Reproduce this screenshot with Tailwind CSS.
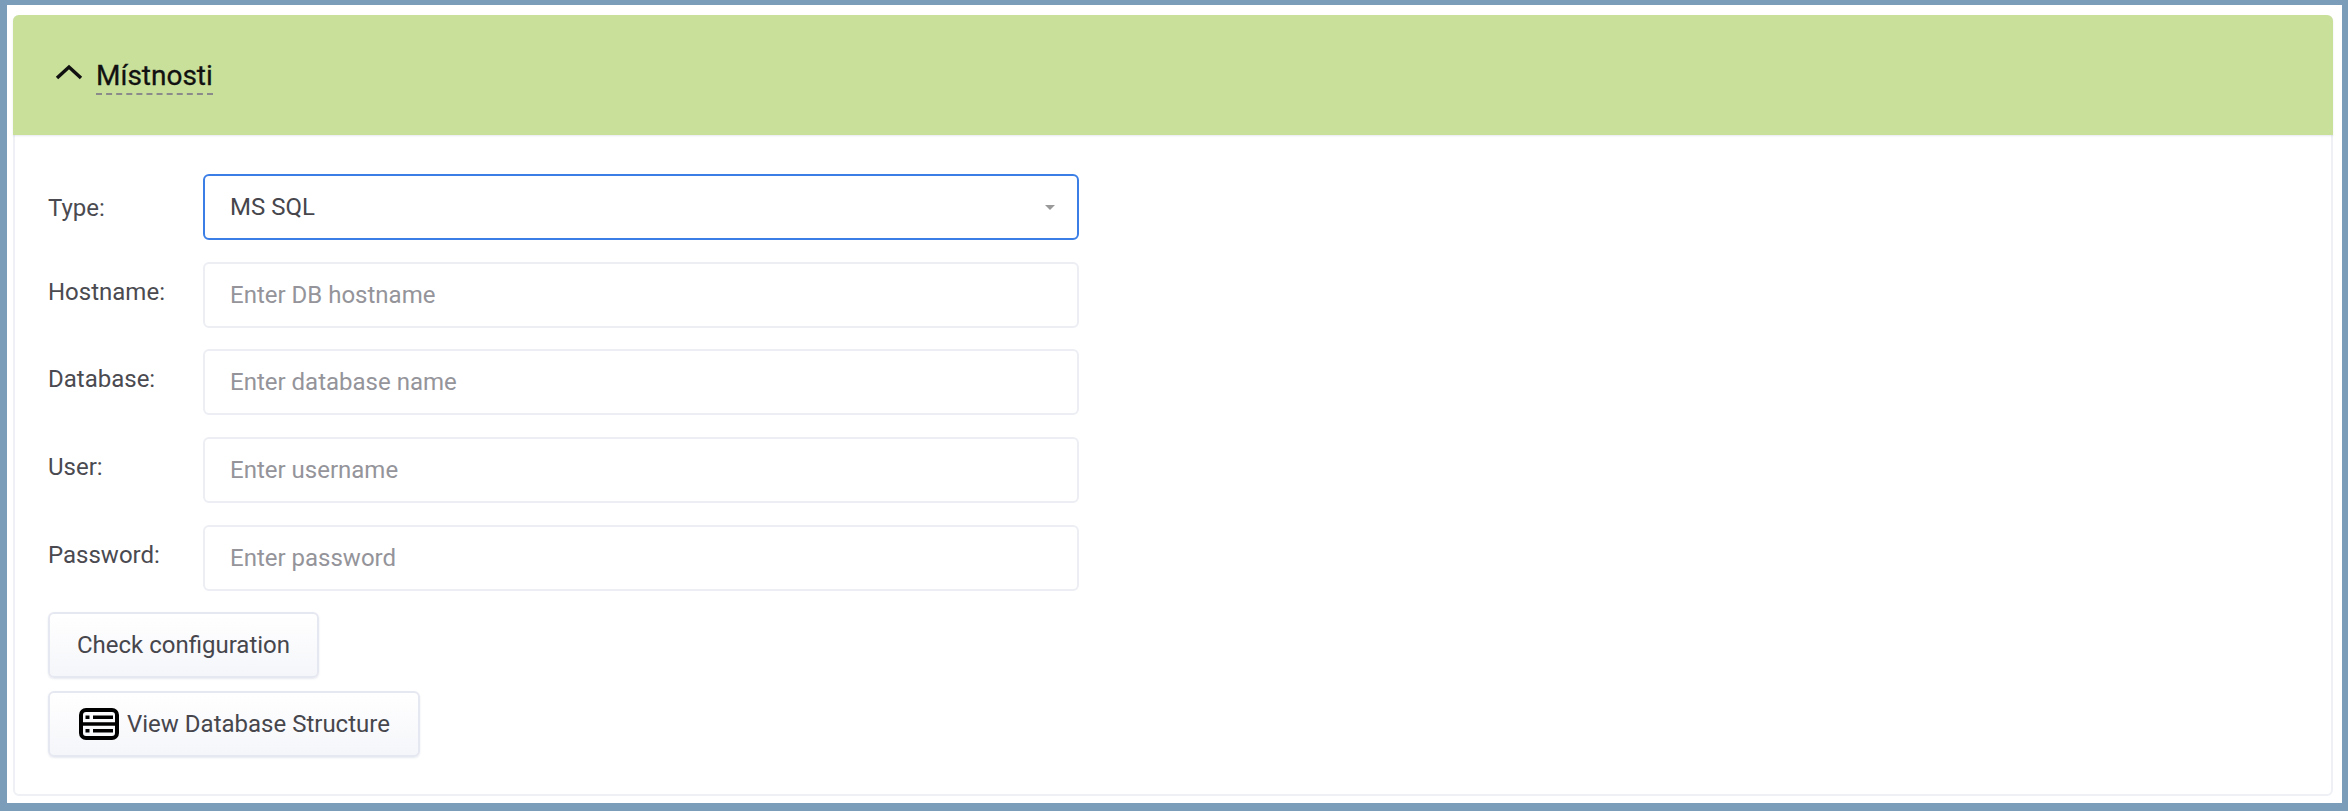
<!DOCTYPE html>
<html lang="en">
<head>
    <meta charset="UTF-8">
    <title>Místnosti</title>
    <script src="https://cdn.jsdelivr.net/npm/@tailwindcss/browser@4"></script>
</head>
<body class="bg-[#7c9dba] h-[811px] overflow-hidden pt-[5px] pr-[6px] pb-[8px] pl-[7px] font-['Roboto',sans-serif]">
    <div class="bg-white h-full pt-[10px] pl-[6px] pr-[9px] pb-[7px]">
        <div class="h-full rounded-[6px] border-2 border-[#eef0f6]">

            <!-- Header -->
            <div class="h-[120px] -m-[2px] mb-0 bg-[#c9e09b] rounded-t-[6px] flex items-center pl-[42px] text-[#111] shadow-[0_1px_2px_rgba(60,70,120,0.12)]">
                <svg class="w-[28px] h-[18px] mr-[13px] mb-[6px]" viewBox="0 0 28 18" fill="none" stroke="#111" stroke-width="3.5">
                    <path d="M2 15 L14 4 L26 15"/>
                </svg>
                <span class="text-[28px] leading-[32px] border-b-2 border-dashed border-[#8a8a8a] pb-[1px] mt-[4px] [-webkit-text-stroke:0.3px_#111]">Místnosti</span>
            </div>

            <!-- Form -->
            <div class="pl-[33px] pt-[39px] text-[24px] text-[#4a4a50]">
                <div class="flex flex-col gap-[21.7px] w-[1031px]">
                    <div class="flex items-center">
                        <label class="w-[155px] pt-[2px]">Type:</label>
                        <div class="w-[876px] h-[66px] rounded-[6px] border-2 border-[#3b7fe6] flex items-center justify-between pl-[25px] pr-[22px] text-[#46464c]">
                            <span>MS SQL</span>
                            <span class="w-0 h-0 border-x-[5px] border-x-transparent border-t-[5px] border-t-[#999]"></span>
                        </div>
                    </div>
                    <div class="flex items-start">
                        <label class="w-[155px] leading-[60px]">Hostname:</label>
                        <input placeholder="Enter DB hostname" class="w-[876px] h-[66px] rounded-[6px] border-2 border-[#eceef4] pl-[25px] placeholder:text-[#94949a]">
                    </div>
                    <div class="flex items-start">
                        <label class="w-[155px] leading-[60px]">Database:</label>
                        <input placeholder="Enter database name" class="w-[876px] h-[66px] rounded-[6px] border-2 border-[#eceef4] pl-[25px] placeholder:text-[#94949a]">
                    </div>
                    <div class="flex items-start">
                        <label class="w-[155px] leading-[60px]">User:</label>
                        <input placeholder="Enter username" class="w-[876px] h-[66px] rounded-[6px] border-2 border-[#eceef4] pl-[25px] placeholder:text-[#94949a]">
                    </div>
                    <div class="flex items-start">
                        <label class="w-[155px] leading-[60px]">Password:</label>
                        <input placeholder="Enter password" class="w-[876px] h-[66px] rounded-[6px] border-2 border-[#eceef4] pl-[25px] placeholder:text-[#94949a]">
                    </div>
                </div>

                <!-- Buttons -->
                <div class="flex flex-col items-start gap-[13px] mt-[21.5px]">
                    <button class="h-[66px] w-[271px] rounded-[6px] border-2 border-[#e6e8f1] bg-gradient-to-b from-white to-[#f5f6fa] shadow-[0_1px_2px_rgba(60,70,120,0.12)] text-[#46464c] whitespace-nowrap">Check configuration</button>
                    <button class="h-[66px] w-[372px] rounded-[6px] border-2 border-[#e6e8f1] bg-gradient-to-b from-white to-[#f5f6fa] shadow-[0_1px_2px_rgba(60,70,120,0.12)] text-[#46464c] flex items-center pl-[29px] whitespace-nowrap">
                        <svg class="w-[40px] h-[32px] mr-[8px] shrink-0" viewBox="0 0 40 32" fill="none">
                            <rect x="2" y="2" width="36" height="28" rx="5" stroke="#000" stroke-width="4"/>
                            <path d="M2 16 H38" stroke="#000" stroke-width="3.5"/>
                            <rect x="6.5" y="7.5" width="4" height="3.5" fill="#000"/>
                            <rect x="14" y="7.5" width="20" height="3.5" fill="#000"/>
                            <rect x="6.5" y="21" width="4" height="3.5" fill="#000"/>
                            <rect x="14" y="21" width="20" height="3.5" fill="#000"/>
                        </svg>
                        View Database Structure
                    </button>
                </div>
            </div>
        </div>
    </div>
</body>
</html>
